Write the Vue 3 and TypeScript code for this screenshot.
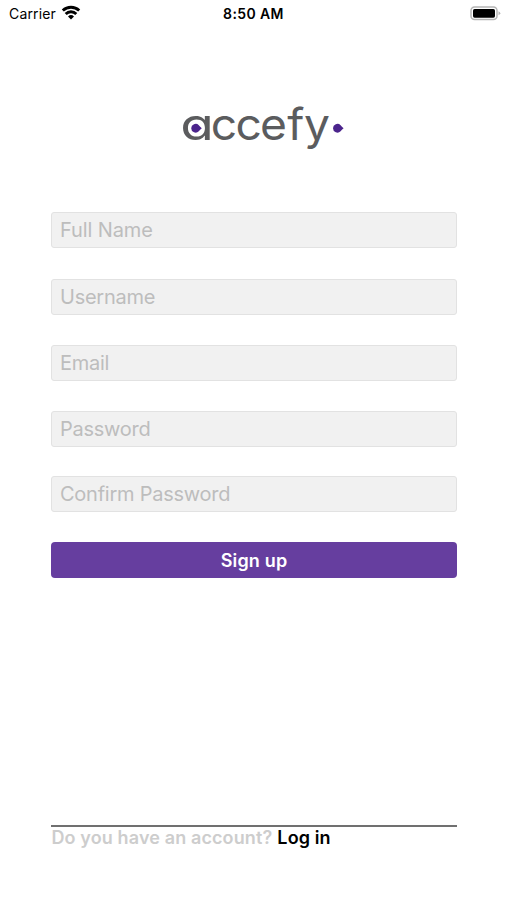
<script setup lang="ts">
import { reactive } from 'vue'

interface Field {
  key: string
  label: string
  type: string
}

const fields: Field[] = [
  { key: 'fullName', label: 'Full Name', type: 'text' },
  { key: 'username', label: 'Username', type: 'text' },
  { key: 'email', label: 'Email', type: 'email' },
  { key: 'password', label: 'Password', type: 'password' },
  { key: 'confirm', label: 'Confirm Password', type: 'password' },
]

const form = reactive<Record<string, string>>({})
</script>

<template>
  <main class="screen">
    <header class="status">
      <div class="carrier">
        <span>Carrier</span>
        <svg class="wifi" width="20" height="15" viewBox="0 0 20 15">
          <g fill="none" stroke="#000" stroke-width="2.9">
            <path d="M1.8 5.5a11.8 11.8 0 0 1 16.4 0" />
            <path d="M4.7 9a7.5 7.5 0 0 1 10.6 0" />
          </g>
          <path d="M7 11.4a4.3 4.3 0 0 1 6 0L10 14.4z" />
        </svg>
      </div>
      <time class="clock">8:50 AM</time>
      <svg class="battery" width="32" height="15" viewBox="0 0 32 15">
        <rect x="1" y="1" width="26" height="12.5" rx="3.5" fill="#fff" stroke="#b5b5b5" stroke-width="1.5" />
        <rect x="3" y="3" width="22" height="8.7" rx="1.6" />
        <path d="M28.5 5.2q1.8.8 1.8 2t-1.8 2z" fill="#b5b5b5" />
      </svg>
    </header>

    <svg class="logo" width="164" height="72" viewBox="0 -12 164 72">
      <text class="wordmark" transform="scale(1.25 1)" x="-1.4" y="36">a</text>
      <text class="wordmark" transform="scale(1.05 1)" y="36" x="27.3 50.9 74.3 100.3 116.2">ccefy</text>
      <path class="dot" d="M9.2 24.2a4.4 4.4 0 0 1 7.6-3q1.2 1.4 3 3-1.8 1.6-3 3a4.4 4.4 0 0 1-7.6-3z" />
      <path class="dot" d="M151 24.2a4.4 4.4 0 0 1 7.6-3q1.2 1.4 3 3-1.8 1.6-3 3a4.4 4.4 0 0 1-7.6-3z" />
    </svg>

    <form class="form" @submit.prevent>
      <input
        v-for="field in fields"
        :key="field.key"
        v-model="form[field.key]"
        class="field"
        :class="field.key"
        :type="field.type"
        :placeholder="field.label"
      />
      <button class="submit" type="submit">Sign up</button>
    </form>

    <footer class="footer">
      <span class="question">Do you have an account?</span>
      <span class="login">Log in</span>
    </footer>
  </main>
</template>

<style>
body {
  margin: 0;
  background: #fff;
}
</style>

<style scoped>
.screen {
  display: flex;
  flex-direction: column;
  box-sizing: border-box;
  width: 507px;
  height: 900px;
  background: #fff;
  color: #000;
  font-family: Inter, "Liberation Sans", sans-serif;
}
.status {
  display: grid;
  grid-template-columns: 1fr auto 1fr;
  align-items: center;
  height: 27px;
  padding: 0 5px 0 9px;
  font-size: 14px;
}
.carrier {
  display: flex;
  align-items: center;
  gap: 5px;
  letter-spacing: 0.15px;
}
.wifi {
  margin-top: -2px;
}
.clock {
  margin-right: 4px;
  font-weight: 600;
  letter-spacing: 0.38px;
}
.battery {
  justify-self: end;
}
.logo {
  flex: none;
  margin: 65px 0 0 182px;
  overflow: visible;
}
.wordmark {
  fill: #5b5c5e;
  font-size: 44px;
  font-weight: 400;
  font-feature-settings: "cv11";
}
.dot {
  fill: #4b248c;
}
.form {
  display: flex;
  flex-direction: column;
  gap: 30px;
  margin: 48.4px 50px 0 51px;
}
.field {
  box-sizing: border-box;
  width: 100%;
  height: 36px;
  padding: 0 8px;
  border: 1px solid #e2e2e2;
  border-radius: 3px;
  outline: none;
  background: #f1f1f1;
  color: #333;
  font: 400 20px Inter, "Liberation Sans", sans-serif;
  letter-spacing: -0.25px;
}
.fullName {
  letter-spacing: -0.1px;
}
.username {
  margin-top: 1px;
}
.confirm {
  margin-top: -1px;
}
.field::placeholder {
  color: #bdbdbd;
  opacity: 1;
}
.submit {
  height: 36px;
  padding: 0;
  border: 0;
  border-radius: 4px;
  background: #663e9f;
  color: #fff;
  font: 600 18px Inter, "Liberation Sans", sans-serif;
  letter-spacing: 0.15px;
}
.footer {
  display: flex;
  gap: 5px;
  margin: auto 50px 51px 51px;
  padding-left: 0.5px;
  border-top: 2px solid #707070;
  font-size: 18px;
  font-weight: 600;
  line-height: 22px;
  letter-spacing: 0.12px;
}
.question {
  color: #cdcdcd;
}
</style>
